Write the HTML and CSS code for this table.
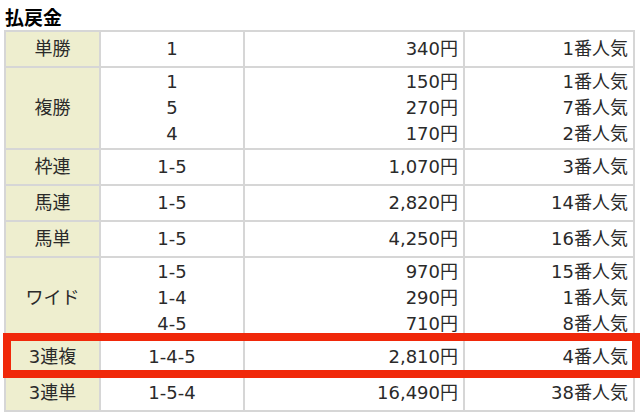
FILE: index.html
```html
<!DOCTYPE html>
<html lang="ja">
<head>
<meta charset="utf-8">
<link rel="stylesheet" href="styles.css">
</head>
<body>
<div class="payout">
  <h2 class="title">払戻金</h2>
  <div class="table-wrap">
    <table class="pay-table">
      <colgroup>
        <col class="c-type"><col class="c-num"><col class="c-yen"><col class="c-pop">
      </colgroup>
      <tbody>
        <tr><th>単勝</th><td class="num">1</td><td class="yen">340円</td><td class="pop">1番人気</td></tr>
        <tr class="multi"><th>複勝</th><td class="num">1<br>5<br>4</td><td class="yen">150円<br>270円<br>170円</td><td class="pop">1番人気<br>7番人気<br>2番人気</td></tr>
        <tr><th>枠連</th><td class="num">1-5</td><td class="yen">1,070円</td><td class="pop">3番人気</td></tr>
        <tr><th>馬連</th><td class="num">1-5</td><td class="yen">2,820円</td><td class="pop">14番人気</td></tr>
        <tr><th>馬単</th><td class="num">1-5</td><td class="yen">4,250円</td><td class="pop">16番人気</td></tr>
        <tr class="multi"><th>ワイド</th><td class="num">1-5<br>1-4<br>4-5</td><td class="yen">970円<br>290円<br>710円</td><td class="pop">15番人気<br>1番人気<br>8番人気</td></tr>
        <tr><th>3連複</th><td class="num">1-4-5</td><td class="yen">2,810円</td><td class="pop">4番人気</td></tr>
        <tr><th>3連単</th><td class="num">1-5-4</td><td class="yen">16,490円</td><td class="pop">38番人気</td></tr>
      </tbody>
    </table>
    <div class="highlight"></div>
  </div>
</div>
</body>
</html>
```

FILE: styles.css
```css
html, body {
  margin: 0;
  padding: 0;
  background: #fff;
}
body {
  font-family: "DejaVu Sans", "Noto Sans CJK JP", sans-serif;
  color: #2a2a2a;
}
.payout {
  padding: 6px 0 0 4px;
}
.title {
  margin: 0 0 2px 1px;
  font-family: "Noto Sans CJK JP", sans-serif;
  font-size: 19px;
  line-height: 22px;
  font-weight: bold;
  color: #000;
}
.table-wrap {
  position: relative;
}
.pay-table {
  border-collapse: collapse;
  width: 629px;
  table-layout: fixed;
  font-size: 18px;
}
.c-type { width: 95px; }
.c-num { width: 144px; }
.c-yen { width: 220px; }
.c-pop { width: 170px; }
.pay-table th,
.pay-table td {
  border: 2px solid #d6d6d6;
  padding: 4px 5px;
  line-height: 26px;
  font-weight: normal;
  white-space: nowrap;
}
.pay-table th {
  background: #eeeecf;
  text-align: center;
}
.pay-table .num { text-align: center; }
.pay-table .yen,
.pay-table .pop { text-align: right; }
.pay-table tr.multi td {
  padding-top: 1px;
  padding-bottom: 1px;
}
.highlight {
  position: absolute;
  left: -1px;
  top: 303px;
  width: 637px;
  height: 45px;
  box-sizing: border-box;
  border: 8px solid #f0280a;
}
```
